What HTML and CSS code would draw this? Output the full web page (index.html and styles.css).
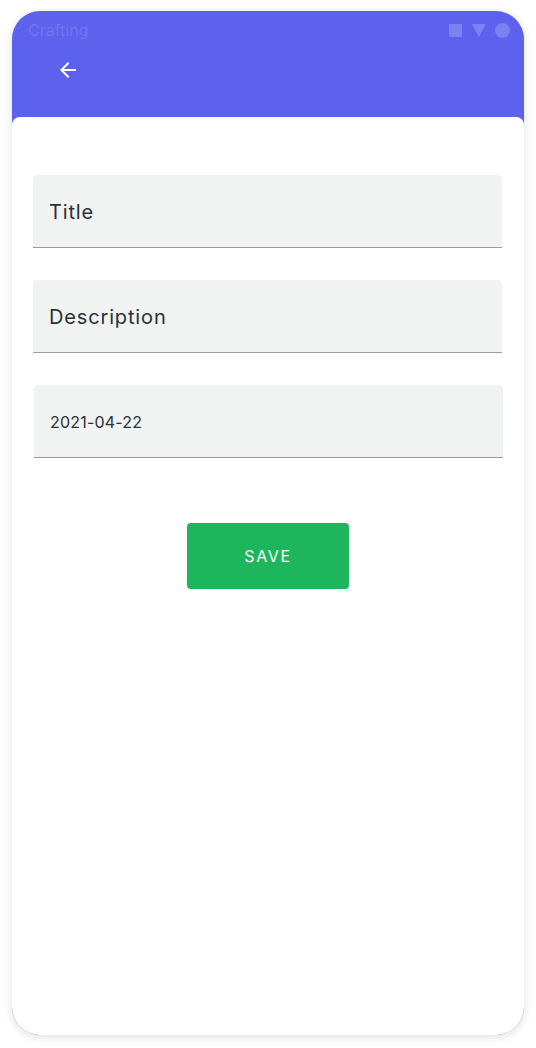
FILE: index.html
```html
<!DOCTYPE html>
<html>
<head>
<meta charset="utf-8">
<link rel="stylesheet" href="styles.css">
</head>
<body>
<div class="device">
  <div class="status">
    <span class="app-name">Crafting</span>
    <div class="status-icons">
      <span class="ico-square"></span>
      <svg class="ico-tri" width="14" height="13" viewBox="0 0 14 13"><polygon points="0,0 14,0 7,13" fill="currentColor"/></svg>
      <span class="ico-circle"></span>
    </div>
  </div>
  <div class="toolbar">
    <svg class="back" width="24" height="24" viewBox="0 0 24 24"><path d="M20 11H7.83l5.59-5.59L12 4l-8 8 8 8 1.41-1.41L7.83 13H20v-2z" fill="#ffffff"/></svg>
  </div>
  <div class="card">
    <div class="field"><span class="label">Title</span></div>
    <div class="field"><span class="label">Description</span></div>
    <div class="field field-date"><span class="value">2021-04-22</span></div>
    <div class="actions">
      <button class="save">SAVE</button>
    </div>
  </div>
</div>
</body>
</html>
```
FILE: styles.css
```css
html, body {
  margin: 0;
  padding: 0;
  background: #ffffff;
}
body {
  font-family: Inter, "Noto Sans", sans-serif;
  padding: 11px 12px 13px 12px;
}
.device {
  width: 512px;
  height: 1024px;
  border-radius: 28px;
  overflow: hidden;
  background: #5c61ee;
  box-shadow: 0 2px 10px rgba(0, 0, 0, 0.13);
  display: flex;
  flex-direction: column;
}
.status {
  height: 38px;
  display: flex;
  align-items: center;
  justify-content: space-between;
  padding: 0 14px 0 16px;
  flex: none;
}
.app-name {
  color: #7176f1;
  font-size: 16px;
  line-height: 20px;
}
.status-icons {
  display: flex;
  align-items: center;
  color: #7c81f2;
}
.ico-square {
  width: 13px;
  height: 13px;
  background: #7c81f2;
}
.ico-tri {
  display: block;
  margin-left: 10px;
}
.ico-circle {
  width: 15px;
  height: 15px;
  border-radius: 50%;
  background: #7c81f2;
  margin-left: 9px;
}
.toolbar {
  height: 68px;
  flex: none;
  display: flex;
  align-items: flex-start;
  padding-left: 44px;
  padding-top: 9px;
  box-sizing: border-box;
}
.back {
  display: block;
}
.card {
  flex: 1;
  background: #ffffff;
  border-radius: 8px 8px 0 0;
  padding: 58px 22px 0 21px;
  display: flex;
  flex-direction: column;
  gap: 32px;
}
.field {
  height: 72px;
  background: #f1f2f2;
  border-radius: 4px 4px 0 0;
  border-bottom: 1px solid #9a9c9c;
  display: flex;
  align-items: center;
  padding-left: 16px;
}
.field-date {
  margin-left: 1px;
  margin-right: -1px;
}
.label {
  font-size: 20px;
  color: #283238;
  letter-spacing: 0.85px;
  margin-top: 1px;
}
.value {
  font-size: 16px;
  color: #283238;
  letter-spacing: 0.2px;
  margin-top: 1px;
}
.actions {
  display: flex;
  justify-content: center;
  margin-top: 33px;
  padding-left: 1px;
}
.save {
  width: 162px;
  height: 66px;
  border: none;
  border-radius: 4px;
  background: #1db65c;
  color: #ffffff;
  font-family: Inter, "Noto Sans", sans-serif;
  font-size: 16px;
  font-weight: 400;
  letter-spacing: 1.6px;
  padding: 0;
}
```
